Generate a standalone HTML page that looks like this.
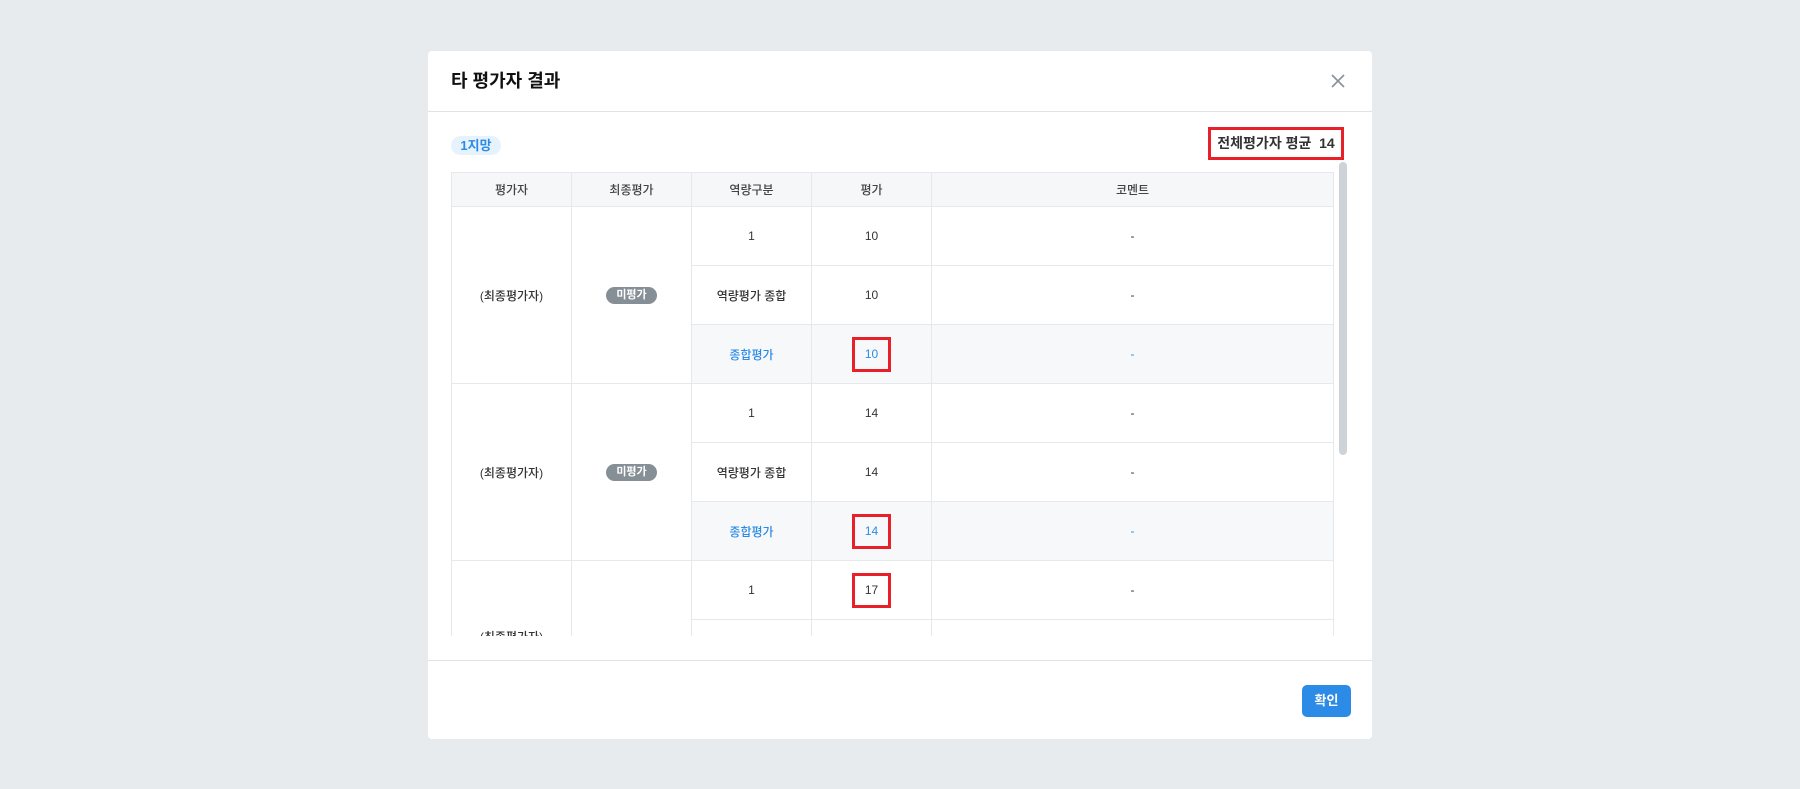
<!DOCTYPE html>
<html><head><meta charset="utf-8"><style>
*{box-sizing:border-box;margin:0;padding:0}
body{width:1800px;height:789px;background:#e8ebee;font-family:"Liberation Sans","Noto Sans CJK KR",sans-serif;position:relative;overflow:hidden;color:#333}
.modal{position:absolute;left:428px;top:51px;width:944px;height:688px;background:#fff;border-radius:4px}
.title{position:absolute;left:23px;top:19px;font-size:18px;font-weight:bold;color:#111;line-height:22px}
.close{position:absolute;left:903px;top:23px}
.hdiv{position:absolute;left:0;right:0;top:60px;border-top:1px solid #dfe2e6}
.fdiv{position:absolute;left:0;right:0;top:609px;border-top:1px solid #dfe2e6}
.chip{position:absolute;left:23px;top:85px;width:50px;height:19px;border-radius:10px;background:#e6f3fd;color:#2c8be6;font-size:13px;font-weight:bold;text-align:center;line-height:19px}
.avg{position:absolute;left:780px;top:76px;width:136px;height:33px;border:3px solid #e8202a;font-size:14px;font-weight:bold;color:#333;line-height:27px;text-align:center}
.wrap{position:absolute;left:23px;top:121px;width:883px;height:464px;overflow:hidden}
table{border-collapse:collapse;width:883px;table-layout:fixed;font-size:12px}
td,th{border:1px solid #e6e8eb;text-align:center;height:59px;color:#333;font-weight:500}
th{height:34px;background:#f5f7f9;color:#444}
tr.sum td.c{background:#f6f8fa;color:#2c8be6}
.badge{display:inline-block;width:51px;height:17px;border-radius:9px;background:#868e96;color:#fff;font-size:11px;font-weight:bold;line-height:17px}
.rb{display:inline-block;width:39px;height:35px;border:3px solid #e8202a;line-height:29px}
.sb{position:absolute;left:911px;top:111px;width:8px;height:293px;border-radius:4px;background:#ced3d8}
.btn{position:absolute;left:874px;top:634px;width:49px;height:32px;border-radius:5px;background:#2c8be6;color:#fff;font-size:13px;font-weight:bold;text-align:center;line-height:32px}
</style></head><body>
<div class="modal">
<div class="title">타 평가자 결과</div>
<svg class="close" width="14" height="14" viewBox="0 0 14 14"><path d="M1 1L13 13M13 1L1 13" stroke="#8a9097" stroke-width="1.6"/></svg>
<div class="hdiv"></div>
<div class="chip">1지망</div>
<div class="avg">전체평가자 평균 &nbsp;14</div>
<div class="wrap"><table>
<colgroup><col style="width:120px"><col style="width:120px"><col style="width:120px"><col style="width:120px"><col></colgroup>
<tr><th>평가자</th><th>최종평가</th><th>역량구분</th><th>평가</th><th>코멘트</th></tr>
<tr><td rowspan="3">(최종평가자)</td><td rowspan="3"><span class="badge">미평가</span></td><td>1</td><td>10</td><td>-</td></tr>
<tr><td>역량평가 종합</td><td>10</td><td>-</td></tr>
<tr class="sum"><td class="c">종합평가</td><td class="c"><span class="rb">10</span></td><td class="c">-</td></tr>
<tr><td rowspan="3">(최종평가자)</td><td rowspan="3"><span class="badge">미평가</span></td><td>1</td><td>14</td><td>-</td></tr>
<tr><td>역량평가 종합</td><td>14</td><td>-</td></tr>
<tr class="sum"><td class="c">종합평가</td><td class="c"><span class="rb">14</span></td><td class="c">-</td></tr>
<tr><td rowspan="3" style="vertical-align:top;padding-top:67px">(최종평가자)</td><td rowspan="3"></td><td>1</td><td><span class="rb">17</span></td><td>-</td></tr>
<tr><td>역량평가 종합</td><td>17</td><td>-</td></tr>
<tr class="sum"><td class="c">종합평가</td><td class="c">17</td><td class="c">-</td></tr>
</table></div>
<div class="sb"></div>
<div class="fdiv"></div>
<div class="btn">확인</div>
</div>
</body></html>
